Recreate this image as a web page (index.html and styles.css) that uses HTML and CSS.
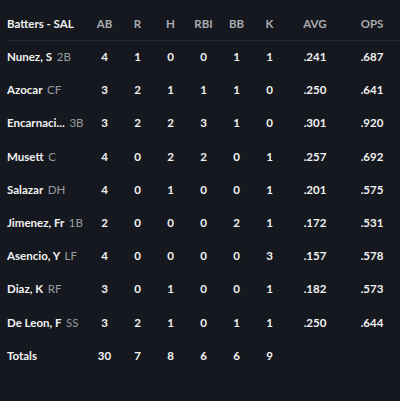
FILE: index.html
```html
<!DOCTYPE html>
<html>
<head>
<meta charset="utf-8">
<link rel="stylesheet" href="styles.css">
</head>
<body>
<div class="box">
  <div class="row head">
    <div class="name">Batters - SAL</div>
    <div>AB</div><div>R</div><div>H</div><div>RBI</div><div>BB</div><div>K</div><div>AVG</div><div>OPS</div>
  </div>
  <div class="row"><div class="name">Nunez, S <span class="pos">2B</span></div><div>4</div><div>1</div><div>0</div><div>0</div><div>1</div><div>1</div><div>.241</div><div>.687</div></div>
  <div class="row"><div class="name">Azocar <span class="pos">CF</span></div><div>3</div><div>2</div><div>1</div><div>1</div><div>1</div><div>0</div><div>.250</div><div>.641</div></div>
  <div class="row"><div class="name">Encarnaci... <span class="pos">3B</span></div><div>3</div><div>2</div><div>2</div><div>3</div><div>1</div><div>0</div><div>.301</div><div>.920</div></div>
  <div class="row"><div class="name">Musett <span class="pos">C</span></div><div>4</div><div>0</div><div>2</div><div>2</div><div>0</div><div>1</div><div>.257</div><div>.692</div></div>
  <div class="row"><div class="name">Salazar <span class="pos">DH</span></div><div>4</div><div>0</div><div>1</div><div>0</div><div>0</div><div>1</div><div>.201</div><div>.575</div></div>
  <div class="row"><div class="name">Jimenez, Fr <span class="pos">1B</span></div><div>2</div><div>0</div><div>0</div><div>0</div><div>2</div><div>1</div><div>.172</div><div>.531</div></div>
  <div class="row"><div class="name">Asencio, Y <span class="pos">LF</span></div><div>4</div><div>0</div><div>0</div><div>0</div><div>0</div><div>3</div><div>.157</div><div>.578</div></div>
  <div class="row"><div class="name">Diaz, K <span class="pos">RF</span></div><div>3</div><div>0</div><div>1</div><div>0</div><div>0</div><div>1</div><div>.182</div><div>.573</div></div>
  <div class="row"><div class="name">De Leon, F <span class="pos">SS</span></div><div>3</div><div>2</div><div>1</div><div>0</div><div>1</div><div>1</div><div>.250</div><div>.644</div></div>
  <div class="row"><div class="name">Totals</div><div>30</div><div>7</div><div>8</div><div>6</div><div>6</div><div>9</div><div></div><div></div></div>
</div>
</body>
</html>
```
FILE: styles.css
```css
html, body {
  margin: 0;
  padding: 0;
  background: #15181e;
}
body {
  width: 400px;
  height: 401px;
  overflow: hidden;
  font-family: "Lato", "Liberation Sans", sans-serif;
  font-weight: 700;
  font-size: 11.5px;
  color: #f2f2f2;
}
.box {
  display: flex;
  flex-direction: column;
}
.row {
  display: grid;
  grid-template-columns: 88px repeat(6, 33px) 58px 56px;
  align-items: center;
  height: 33.2px;
  text-align: center;
}
.row.head {
  height: 34px;
  padding-top: 6px;
  border-bottom: 1px solid #262a31;
  margin-left: 7px;
  grid-template-columns: 81px repeat(6, 33px) 58px 56px;
  color: #a9abb0;
}
.row.head + .row {
  margin-top: -1px;
}
.row.head .name {
  padding-left: 0;
  color: #f2f2f2;
}
.name {
  text-align: left;
  padding-left: 7px;
  white-space: nowrap;
}
.pos {
  font-weight: 400;
  color: #9a9ca1;
  margin-left: 2px;
}
```
